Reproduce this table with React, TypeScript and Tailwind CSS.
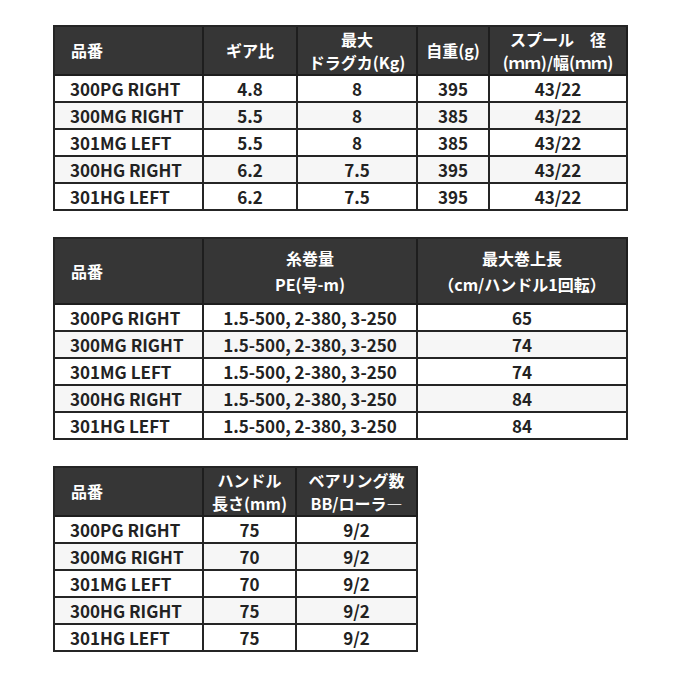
import React from "react";

const font = { fontFamily: "'Noto Sans CJK JP', 'Noto Sans', sans-serif" };

const rows = ["300PG RIGHT", "300MG RIGHT", "301MG LEFT", "300HG RIGHT", "301HG LEFT"];

type Col = { w: string; head: React.ReactNode; vals: string[] };

function Table({ cols, headH, tw, lh }: { cols: Col[]; headH: string; tw: string; lh: string }) {
  return (
    <table className={`${tw} border-separate border-spacing-0 border-l-2 border-t-2 border-[#252525] table-fixed`} style={font}>
      <thead>
        <tr>
          <th className={`w-[149px] ${headH} bg-[#363636] border-r-2 border-b-2 border-[#1e1e1e] text-left pl-[16px] text-white text-[16px] font-bold ${lh}`}>
            品番
          </th>
          {cols.map((c, i) => (
            <th
              key={i}
              className={`${c.w} ${headH} bg-[#363636] border-r-2 border-b-2 border-[#1e1e1e] text-center text-white text-[16px] font-bold ${lh} whitespace-nowrap`}
            >
              {c.head}
            </th>
          ))}
        </tr>
      </thead>
      <tbody>
        {rows.map((r, ri) => (
          <tr key={r} className={ri % 2 === 1 ? "bg-[#f6f6f6]" : "bg-white"}>
            <td className="h-[27px] border-r-2 border-b-2 border-[#252525] pl-[15px] text-[17px] font-bold text-[#222] leading-none whitespace-nowrap">
              {r}
            </td>
            {cols.map((c, i) => (
              <td
                key={i}
                className="h-[27px] border-r-2 border-b-2 border-[#252525] text-center text-[17px] font-bold text-[#222] leading-none whitespace-nowrap"
              >
                {c.vals[ri]}
              </td>
            ))}
          </tr>
        ))}
      </tbody>
    </table>
  );
}

export default function App() {
  return (
    <div className="w-[680px] h-[680px] bg-white pl-[53px] pt-[25px] flex flex-col items-start gap-[26px]" style={font}>
      <Table
        tw="w-[573px]"
        headH="h-[49px]"
        lh="leading-[23px]"
        cols={[
          { w: "w-[94px]", head: "ギア比", vals: ["4.8", "5.5", "5.5", "6.2", "6.2"] },
          {
            w: "w-[120px]",
            head: (
              <>
                <div>最大</div>
                <div>ドラグカ(Kg)</div>
              </>
            ),
            vals: ["8", "8", "8", "7.5", "7.5"],
          },
          { w: "w-[72px]", head: "自重(g)", vals: ["395", "385", "385", "395", "395"] },
          {
            w: "w-[138px]",
            head: (
              <>
                <div>スプール　径</div>
                <div>(ｍｍ)/幅(ｍｍ)</div>
              </>
            ),
            vals: ["43/22", "43/22", "43/22", "43/22", "43/22"],
          },
        ]}
      />
      <Table
        tw="w-[573px]"
        headH="h-[66px]"
        lh="leading-[26px]"
        cols={[
          {
            w: "w-[214px]",
            head: (
              <>
                <div>糸巻量</div>
                <div>PE(号-m)</div>
              </>
            ),
            vals: Array(5).fill("1.5-500, 2-380, 3-250"),
          },
          {
            w: "w-[210px]",
            head: (
              <>
                <div>最大巻上長</div>
                <div>（cm/ハンドル1回転）</div>
              </>
            ),
            vals: ["65", "74", "74", "84", "84"],
          },
        ]}
      />
      <Table
        tw="w-[363px]"
        headH="h-[49px]"
        lh="leading-[23px]"
        cols={[
          {
            w: "w-[93px]",
            head: (
              <>
                <div>ハンドル</div>
                <div>長さ(mm)</div>
              </>
            ),
            vals: ["75", "70", "70", "75", "75"],
          },
          {
            w: "w-[121px]",
            head: (
              <>
                <div>ベアリング数</div>
                <div>BB/ローラ―</div>
              </>
            ),
            vals: Array(5).fill("9/2"),
          },
        ]}
      />
    </div>
  );
}
